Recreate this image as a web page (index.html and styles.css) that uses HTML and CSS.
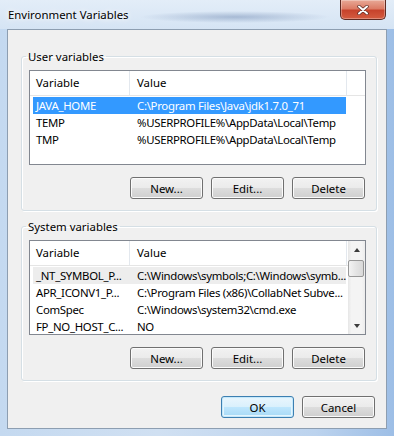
FILE: index.html
```html
<!DOCTYPE html>
<html lang="en">
<head>
    <meta charset="UTF-8">
    <title>Environment Variables</title>
    <link rel="stylesheet" href="styles.css">
</head>
<body>
    <div class="window">
        <div class="titlebar">
            <span class="title">Environment Variables</span>
            <div class="close">
                <svg width="12" height="10" viewBox="0 0 12 10">
                    <path d="M2 1.5 L10 8.5 M10 1.5 L2 8.5" stroke="#5a2a24" stroke-width="3.4" stroke-linecap="round"/>
                    <path d="M2 1.5 L10 8.5 M10 1.5 L2 8.5" stroke="#fff" stroke-width="2" stroke-linecap="round"/>
                </svg>
            </div>
        </div>
        <div class="client">
            <fieldset class="group">
                <legend>User variables</legend>
                <div class="list">
                    <div class="list-main">
                        <div class="list-head">
                            <div class="h-var">Variable</div>
                            <div class="h-val">Value</div>
                        </div>
                        <div class="list-body">
                            <div class="row selected"><span class="c-var">JAVA_HOME</span><span class="c-val">C:\Program Files\Java\jdk1.7.0_71</span></div>
                            <div class="row"><span class="c-var">TEMP</span><span class="c-val">%USERPROFILE%\AppData\Local\Temp</span></div>
                            <div class="row"><span class="c-var">TMP</span><span class="c-val">%USERPROFILE%\AppData\Local\Temp</span></div>
                        </div>
                    </div>
                </div>
                <div class="btn-row">
                    <button class="btn">New...</button>
                    <button class="btn">Edit...</button>
                    <button class="btn">Delete</button>
                </div>
            </fieldset>
            <fieldset class="group second">
                <legend>System variables</legend>
                <div class="list">
                    <div class="list-main">
                        <div class="list-head">
                            <div class="h-var">Variable</div>
                            <div class="h-val">Value</div>
                        </div>
                        <div class="list-body">
                            <div class="row hover"><span class="c-var">_NT_SYMBOL_P...</span><span class="c-val">C:\Windows\symbols;C:\Windows\symb...</span></div>
                            <div class="row"><span class="c-var">APR_ICONV1_P...</span><span class="c-val">C:\Program Files (x86)\CollabNet Subve...</span></div>
                            <div class="row"><span class="c-var">ComSpec</span><span class="c-val">C:\Windows\system32\cmd.exe</span></div>
                            <div class="row"><span class="c-var">FP_NO_HOST_C...</span><span class="c-val">NO</span></div>
                        </div>
                    </div>
                    <div class="scroll">
                        <div class="arrow up"></div>
                        <div class="thumb"></div>
                        <div class="track"></div>
                        <div class="arrow down"></div>
                    </div>
                </div>
                <div class="btn-row">
                    <button class="btn">New...</button>
                    <button class="btn">Edit...</button>
                    <button class="btn">Delete</button>
                </div>
            </fieldset>
            <div class="dialog-buttons">
                <button class="btn default">OK</button>
                <button class="btn">Cancel</button>
            </div>
        </div>
    </div>
</body>
</html>
```
FILE: styles.css
```css
body{
    margin: 0;
    padding: 0;
    font-family: "Noto Sans", "Open Sans", sans-serif;
    font-size: 11.4px;
    color: #000;
}
.window{
    width: 394px;
    height: 436px;
    display: flex;
    flex-direction: column;
    overflow: hidden;
    background: linear-gradient(to right, #c4d9f0 0, #d0e0f2 40%, #bcd3ee 80%, #9dbee6 100%);
}
.titlebar{
    height: 29px;
    flex: none;
    display: flex;
    justify-content: space-between;
    align-items: flex-start;
    padding: 0 8px;
    background:
        radial-gradient(ellipse 95px 6px at 235px 17px, rgba(70, 100, 150, 0.35), rgba(70, 100, 150, 0)),
        linear-gradient(to bottom, #e3edf8, #d5e4f4);
}
.title{
    margin-top: 7px;
    line-height: 15px;
    text-shadow: 0 0 5px #fff, 0 0 8px #fff;
}
.close{
    width: 44px;
    height: 19px;
    border: 1px solid #5e2a22;
    border-top: none;
    border-radius: 0 0 5px 5px;
    box-shadow: inset 0 0 0 1px rgba(255, 255, 255, 0.3);
    background: linear-gradient(to bottom, #e8a997 0, #dc7c66 45%, #c7432c 55%, #d45c40 100%);
    display: flex;
    align-items: center;
    justify-content: center;
}
.client{
    margin: 0 7px 7px;
    height: 398px;
    border: 1px solid #8d9eb1;
    background-color: #f0f0f0;
    display: flex;
    flex-direction: column;
}
.group{
    margin: 19px 9px 0 13px;
    padding: 6px 10px 11px 7px;
    border: 1px solid #d5dfe5;
    border-radius: 3px;
    box-shadow: inset 1px 1px 0 #fff, 1px 1px 0 #fff;
    min-width: 0;
}
.group.second{
    margin-top: 8px;
}
.group legend{
    padding: 0 2px;
    margin-left: -3px;
    line-height: 15px;
}
.list{
    height: 95px;
    box-sizing: border-box;
    border: 1px solid #828790;
    background-color: #fff;
    display: flex;
    overflow: hidden;
}
.list-main{
    flex: 1;
    min-width: 0;
}
.list-head{
    display: flex;
    height: 24px;
    line-height: 24px;
    border-bottom: 1px solid #e5e5e5;
}
.h-var{
    width: 100px;
    padding-left: 6px;
    box-sizing: border-box;
    border-right: 1px solid #e3e8ee;
}
.h-val{
    width: 217px;
    padding-left: 7px;
    box-sizing: border-box;
    border-right: 1px solid #e3e8ee;
}
.list-body{
    padding-top: 1px;
}
.row{
    display: flex;
    height: 17px;
    line-height: 17px;
    margin-left: 3px;
    width: 313px;
    white-space: nowrap;
    letter-spacing: -0.3px;
}
.row.selected{
    background-color: #3399ff;
    color: #fff;
}
.row.hover{
    background-color: #ededed;
}
.c-var{
    width: 96px;
    flex: none;
    padding-left: 3px;
    box-sizing: border-box;
    overflow: hidden;
}
.c-val{
    flex: 1;
    padding-left: 8px;
    overflow: hidden;
}
.scroll{
    width: 17px;
    flex: none;
    display: flex;
    flex-direction: column;
    background: linear-gradient(to right, #e6e6e6, #f4f4f4 20%, #f4f4f4 80%, #ececec);
}
.arrow{
    height: 17px;
    display: flex;
    align-items: center;
    justify-content: center;
}
.arrow::before{
    content: "";
    border-left: 3.5px solid transparent;
    border-right: 3.5px solid transparent;
}
.arrow.up::before{
    border-bottom: 4px solid #3c3c3c;
}
.arrow.down::before{
    border-top: 4px solid #3c3c3c;
}
.thumb{
    margin: 2px 1px 0 0;
    height: 15px;
    border: 1px solid #979797;
    border-radius: 2px;
    background: linear-gradient(to right, #f3f3f3, #e4e4e4 50%, #d9d9d9);
}
.track{
    flex: 1;
}
.btn-row{
    display: flex;
    justify-content: flex-end;
    gap: 8px;
    margin-top: 12px;
    padding-right: 1px;
}
.btn{
    width: 73px;
    height: 22px;
    box-sizing: border-box;
    padding: 0;
    font: inherit;
    color: #000;
    border: 1px solid #707070;
    border-radius: 3px;
    box-shadow: inset 0 0 0 1px #fbfbfb;
    background: linear-gradient(to bottom, #f2f2f2 0, #ebebeb 50%, #dddddd 51%, #cfcfcf 100%);
}
.btn.default{
    border-color: #3c7fb1;
    box-shadow: inset 0 0 0 1px #c5e8fb, inset 0 0 0 2px #e4f5fd;
    background: linear-gradient(to bottom, #eaf6fd 0, #d9f0fc 50%, #bee6fd 51%, #a7d9f5 100%);
}
.dialog-buttons{
    display: flex;
    justify-content: flex-end;
    gap: 8px;
    margin: 15px 11px 0 0;
}
```
